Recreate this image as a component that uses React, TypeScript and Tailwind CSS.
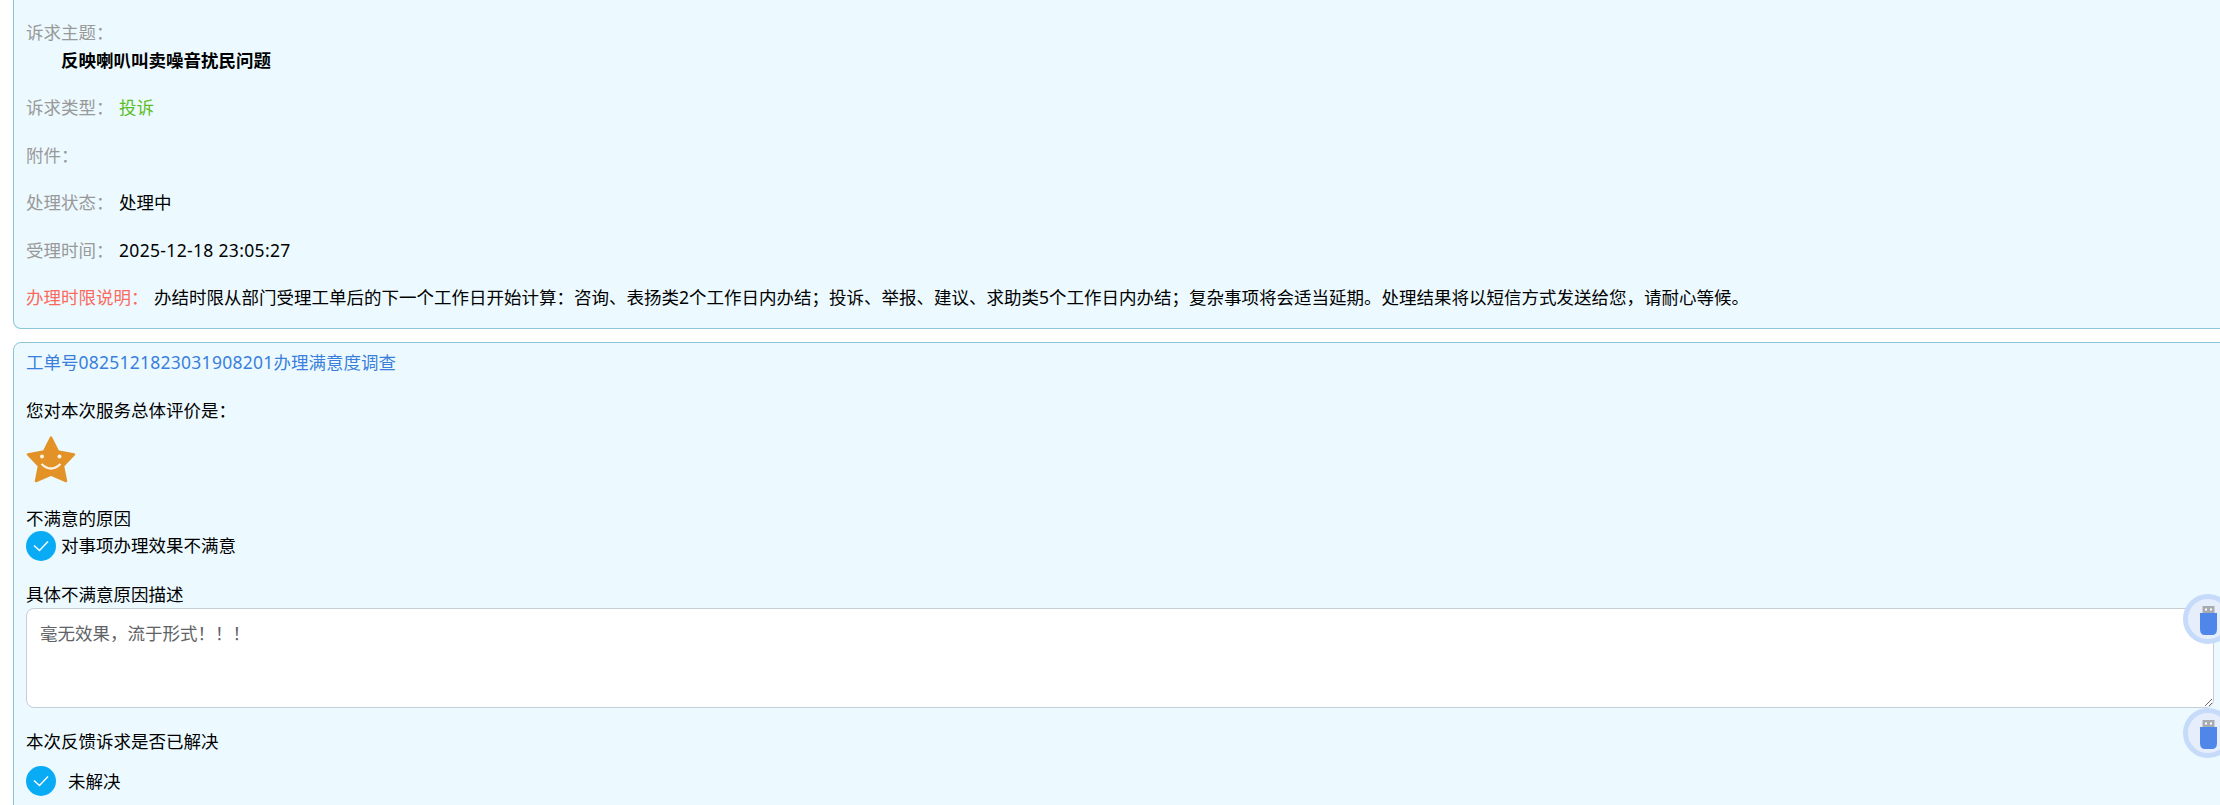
const font = "font-['Noto_Sans','Noto_Sans_CJK_SC',sans-serif]";

function InfoRow({ label, children, labelClass = 'text-[#999999]' }: { label: string; children?: React.ReactNode; labelClass?: string }) {
    return (
        <div className="flex gap-[5.5px] h-[26px] leading-[26px]">
            <span className={labelClass}>{label}</span>
            {children}
        </div>
    );
}

function CheckCircle() {
    return (
        <span className="w-[30px] h-[30px] rounded-full bg-[#0aabf5] flex items-center justify-center shrink-0">
            <svg width="18" height="14" viewBox="0 0 18 14" fill="none">
                <path d="M2 6.5 L7.5 11.5 L16 2.5" stroke="#ffffff" strokeWidth="1.4" />
            </svg>
        </span>
    );
}

function SmileStar() {
    return (
        <svg width="50" height="47" viewBox="0 0 50 47">
            <path
                d="M25 1.5 L32 15.5 L48 18.5 L37 30 L40 45 L25 38.5 L10 45 L13 30 L2 18.5 L18 15.5 Z"
                fill="#e29227"
                stroke="#e29227"
                strokeWidth="2.5"
                strokeLinejoin="round"
            />
            <circle cx="16" cy="20.5" r="2" fill="#fdf3e0" />
            <circle cx="33.5" cy="20.5" r="2" fill="#fdf3e0" />
            <path d="M15.5 28 Q25 37 34.5 28" fill="none" stroke="#fdf3e0" strokeWidth="2.2" />
        </svg>
    );
}

function UsbBubble({ className }: { className: string }) {
    return (
        <div className={`absolute w-[50px] h-[50px] rounded-full bg-[#e6eefc] border-[5px] border-[#c6daf9] flex items-center justify-center ${className}`}>
            <svg width="17" height="29" viewBox="0 0 17 29" className="mt-[2px]">
                <rect x="2.5" y="0" width="12" height="8" fill="#a9abb2" />
                <rect x="5" y="2.5" width="2" height="2" fill="#ffffff" />
                <rect x="10" y="2.5" width="2" height="2" fill="#ffffff" />
                <path d="M0 7 H17 V23 Q17 29 12 29 H5 Q0 29 0 23 Z" fill="#4f86ea" />
            </svg>
        </div>
    );
}

export default function App() {
    return (
        <div className={`relative h-[805px] w-[2220px] overflow-hidden bg-white pl-[13px] text-[17.5px] text-black ${font}`}>
            {/* Ticket info */}
            <div className="w-[2240px] h-[329px] bg-[#ecfaff] border border-t-0 border-[#8cc4d8] rounded-b-lg pt-[19px] pl-3">
                <div className="h-[26px] leading-[26px] text-[#999999]">{'诉求主题\uFF1A'}</div>
                <div className="h-[28px] leading-[28px] pl-[35px] font-bold mt-[1px]">反映喇叭叫卖噪音扰民问题</div>
                <div className="flex flex-col gap-[21.5px] mt-[20px]">
                    <InfoRow label={'诉求类型\uFF1A'}>
                        <span className="text-[#5cbd26]">投诉</span>
                    </InfoRow>
                    <InfoRow label={'附件\uFF1A'} />
                    <InfoRow label={'处理状态\uFF1A'}>
                        <span>处理中</span>
                    </InfoRow>
                    <InfoRow label={'受理时间\uFF1A'}>
                        <span className="tracking-[0.33px]">2025-12-18 23:05:27</span>
                    </InfoRow>
                    <InfoRow label={'办理时限说明\uFF1A'} labelClass="text-[#fa6a5f]">
                        <span>{'办结时限从部门受理工单后的下一个工作日开始计算\uFF1A咨询、表扬类2个工作日内办结\uFF1B投诉、举报、建议、求助类5个工作日内办结\uFF1B复杂事项将会适当延期。处理结果将以短信方式发送给您\uFF0C请耐心等候。'}</span>
                    </InfoRow>
                </div>
            </div>

            {/* Satisfaction survey */}
            <div className="w-[2240px] h-[500px] mt-[13px] bg-[#ecfaff] border border-[#8cc4d8] rounded-t-lg pt-[6px] pl-3">
                <div className="h-[26px] leading-[26px] text-[#3a7fdc]">
                    工单号<span className="tracking-[0.25px]">0825121823031908201</span>办理满意度调查
                </div>
                <div className="h-[26px] leading-[26px] mt-[22px]">{'您对本次服务总体评价是\uFF1A'}</div>
                <div className="mt-[13px] h-[47px]">
                    <SmileStar />
                </div>
                <div className="h-[26px] leading-[26px] mt-[22px]">不满意的原因</div>
                <div className="flex items-center gap-[5px] h-[30px]">
                    <CheckCircle />
                    <span className="mt-[-2px]">对事项办理效果不满意</span>
                </div>
                <div className="h-[26px] leading-[26px] mt-[20px]">具体不满意原因描述</div>
                <textarea
                    readOnly
                    defaultValue={'毫无效果\uFF0C流于形式\uFF01\uFF01\uFF01'}
                    className="block mt-[1px] w-[2188px] h-[100px] bg-white border border-[#c5cdd6] rounded-lg px-[13px] py-[11px] text-[17.5px] leading-[26px] text-[#606266] outline-none"
                />
                <div className="h-[26px] leading-[26px] mt-[20px]">本次反馈诉求是否已解决</div>
                <div className="flex items-center gap-[12px] h-[30px] mt-[12px]">
                    <CheckCircle />
                    <span>未解决</span>
                </div>
            </div>

            {/* Floating widgets */}
            <UsbBubble className="left-[2183px] top-[594px]" />
            <UsbBubble className="left-[2183px] top-[708px]" />
        </div>
    );
}
